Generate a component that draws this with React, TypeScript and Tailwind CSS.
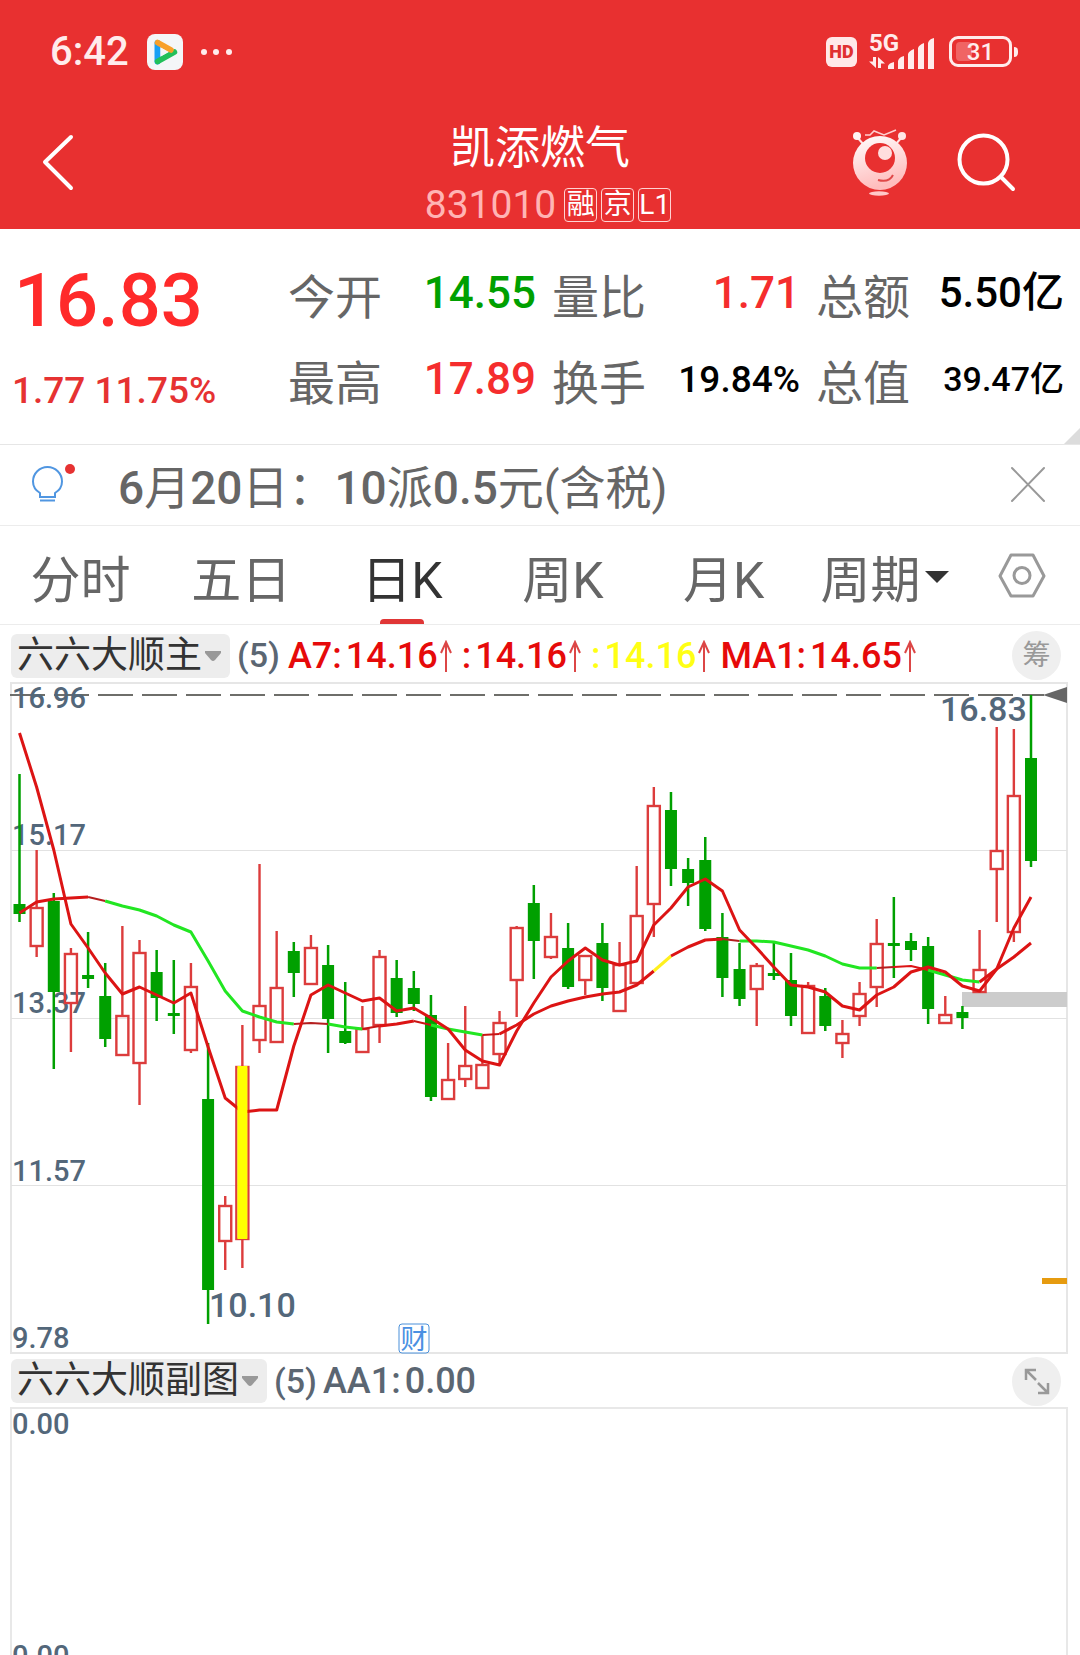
import { clsx } from "clsx";

type CandleKind = "up" | "down" | "mark";
type Candle = [kind: CandleKind, high: number, top: number, bottom: number, low: number];

const candles: Candle[] = [
  ["down", 94, 224, 234, 242],
  ["up", 170, 228, 266, 277],
  ["down", 213, 221, 312, 389],
  ["up", 268, 274, 323, 372],
  ["down", 252, 295, 299, 308],
  ["down", 283, 316, 359, 367],
  ["up", 246, 336, 375, 375],
  ["up", 260, 273, 383, 425],
  ["down", 270, 292, 318, 341],
  ["down", 280, 333, 336, 354],
  ["up", 283, 307, 370, 373],
  ["down", 363, 419, 610, 644],
  ["up", 516, 526, 561, 590],
  ["mark", 345, 387, 559, 588],
  ["up", 184, 326, 360, 373],
  ["up", 251, 308, 362, 362],
  ["down", 262, 271, 293, 317],
  ["up", 255, 268, 304, 304],
  ["down", 265, 285, 339, 373],
  ["down", 302, 351, 363, 364],
  ["up", 326, 349, 372, 372],
  ["up", 270, 277, 345, 363],
  ["down", 280, 298, 333, 337],
  ["down", 291, 308, 324, 331],
  ["down", 315, 335, 417, 421],
  ["up", 363, 400, 419, 419],
  ["up", 326, 386, 399, 407],
  ["up", 355, 385, 408, 408],
  ["up", 331, 343, 374, 383],
  ["up", 246, 248, 300, 337],
  ["down", 205, 223, 261, 299],
  ["up", 233, 257, 277, 279],
  ["down", 243, 268, 307, 309],
  ["up", 275, 276, 300, 315],
  ["down", 243, 263, 308, 321],
  ["up", 262, 285, 331, 331],
  ["up", 186, 236, 303, 303],
  ["up", 107, 126, 224, 257],
  ["down", 112, 130, 189, 206],
  ["down", 178, 189, 203, 226],
  ["down", 157, 180, 249, 251],
  ["down", 233, 257, 298, 317],
  ["down", 263, 289, 319, 326],
  ["up", 283, 286, 309, 346],
  ["down", 263, 293, 296, 300],
  ["down", 273, 300, 336, 346],
  ["up", 302, 306, 353, 353],
  ["down", 308, 316, 346, 351],
  ["up", 340, 354, 363, 378],
  ["up", 302, 314, 336, 346],
  ["up", 239, 264, 307, 327],
  ["down", 217, 263, 266, 298],
  ["down", 253, 261, 270, 281],
  ["down", 257, 266, 329, 344],
  ["up", 316, 335, 343, 343],
  ["down", 326, 332, 338, 349],
  ["up", 250, 290, 312, 312],
  ["up", 47, 171, 189, 242],
  ["up", 49, 116, 252, 262],
  ["down", 15, 78, 181, 187],
];

const fastLine = [
  53, 107, 170, 244, 268, 293, 314, 307, 315, 323, 313, 367, 418, 432, 430, 430, 366, 315, 305, 313,
  321, 318, 331, 328, 338, 349, 370, 381, 385, 351, 323, 297, 281, 268, 280, 285, 281, 245, 228, 207,
  199, 211, 250, 268, 287, 305, 307, 312, 326, 330, 315, 307, 292, 287, 292, 306, 311, 289, 248, 217,
];

const slowLine = [
  233, 222, 219, 218, 217, 221, 226, 230, 236, 245, 252, 281, 311, 331, 337, 342, 344, 343, 344, 347,
  349, 346, 344, 341, 345, 349, 352, 355, 354, 345, 334, 326, 321, 317, 314, 312, 305, 291, 276, 267,
  260, 259, 261, 261, 262, 266, 270, 276, 284, 288, 288, 287, 286, 290, 295, 300, 302, 289, 277, 263,
];

// The slow average changes colour with its direction.
const slowSegments: { from: number; to: number; color: string; width: number }[] = [
  { from: 0, to: 4, color: "#dc1414", width: 3 },
  { from: 4, to: 5, color: "#b41e1e", width: 2 },
  { from: 5, to: 16, color: "#22e622", width: 3 },
  { from: 16, to: 18, color: "#b41e1e", width: 2 },
  { from: 18, to: 20, color: "#22e622", width: 3 },
  { from: 20, to: 21, color: "#c81414", width: 2 },
  { from: 21, to: 23, color: "#dc1414", width: 3 },
  { from: 23, to: 24, color: "#c81414", width: 2 },
  { from: 24, to: 27, color: "#22e622", width: 3 },
  { from: 27, to: 28, color: "#c81414", width: 2 },
  { from: 28, to: 37, color: "#dc1414", width: 3 },
  { from: 37, to: 38, color: "#fff01e", width: 3 },
  { from: 38, to: 41, color: "#dc1414", width: 3 },
  { from: 41, to: 42, color: "#b41e1e", width: 2 },
  { from: 42, to: 50, color: "#22e622", width: 3 },
  { from: 50, to: 51, color: "#b41e1e", width: 2 },
  { from: 51, to: 53, color: "#dc1414", width: 2 },
  { from: 53, to: 56, color: "#22e622", width: 3 },
  { from: 56, to: 59, color: "#dc1414", width: 3 },
];

const axisLabels = [
  { text: "16.96", y: 28 },
  { text: "15.17", y: 165 },
  { text: "13.37", y: 333 },
  { text: "11.57", y: 501 },
  { text: "9.78", y: 668 },
];

const STEP = 1011.5 / 59;
const xOf = (i: number) => 19.5 + STEP * i;

function linePoints(values: number[], from = 0, to = values.length - 1) {
  return values
    .slice(from, to + 1)
    .map((y, i) => `${xOf(from + i).toFixed(1)},${y}`)
    .join(" ");
}

function CandleShape({ candle, index }: { candle: Candle; index: number }) {
  const [kind, high, top, bottom, low] = candle;
  const x = xOf(index);
  if (kind === "down") {
    return (
      <g fill="#00a000">
        <rect x={x - 1.25} y={high} width={2.5} height={low - high} />
        <rect x={x - 6} y={top} width={12} height={bottom - top} />
      </g>
    );
  }
  return (
    <g stroke="#dc3c3c" strokeWidth={2.4} fill="none">
      <path d={`M${x} ${high}V${top}M${x} ${bottom}V${low}`} />
      <rect x={x - 6} y={top} width={12} height={bottom - top} />
    </g>
  );
}

function MainChart() {
  const mark = candles.findIndex(([kind]) => kind === "mark");
  return (
    <svg viewBox="0 0 1080 675" className="block w-full" role="img" aria-label="日K线图">
      <rect x={11} y={3} width={1056} height={670} fill="none" stroke="#e6e6e6" strokeWidth={2} />
      <path d="M11 170.5H1067M11 338.5H1067M11 505.5H1067" stroke="#e2e2e2" strokeWidth={1} />
      <rect x={962} y={312} width={105} height={15} fill="#cccccc" />
      <rect x={1042} y={598} width={25} height={6} fill="#e69b0f" />
      <path d="M10 15H1044" stroke="#6e6e6a" strokeWidth={2} strokeDasharray="35 9" />
      <path d="M1022 15H1044" stroke="#6e6e6a" strokeWidth={2} />
      <path d="M1043 15L1067 7V23Z" fill="#666666" />
      <g fontSize={29} fontWeight={500} fill="#53677a">
        {axisLabels.map((label) => (
          <text key={label.text} x={12} y={label.y}>
            {label.text}
          </text>
        ))}
      </g>
      {candles.map((candle, i) => (
        <CandleShape key={i} candle={candle} index={i} />
      ))}
      {slowSegments.map((s) => (
        <polyline
          key={s.from}
          points={linePoints(slowLine, s.from, s.to)}
          fill="none"
          stroke={s.color}
          strokeWidth={s.width}
          strokeLinejoin="round"
        />
      ))}
      <polyline points={linePoints(fastLine)} fill="none" stroke="#dc1414" strokeWidth={3} strokeLinejoin="round" />
      <rect x={xOf(mark) - 5} y={386} width={10} height={173} fill="#ffff00" />
      <g fontSize={34} fontWeight={500} fill="#53677a">
        <text x={940} y={41}>16.83</text>
        <text x={209} y={637}>10.10</text>
      </g>
      <rect x={399} y={644} width={30} height={29} rx={3} fill="#ffffff" stroke="#4a90d9" strokeWidth={1} />
      <text x={414} y={669} fontSize={27} textAnchor="middle" fill="#4a90e2">
        财
      </text>
    </svg>
  );
}

function StatusBar() {
  return (
    <div className="flex h-[103px] items-center justify-between pr-[62px] pl-[50px] text-[#ffecec]">
      <div className="flex items-center">
        <span className="text-[40px] font-medium">6:42</span>
        <svg className="ml-[18px] size-9" viewBox="0 0 36 36" aria-hidden="true">
          <rect width="36" height="36" rx="8" fill="#f4f6f8" />
          <path d="M10.5 9V27.500" stroke="#18a0f5" strokeWidth="6" strokeLinecap="round" />
          <path d="M10.500 27.500L27.500 18" stroke="#22c05a" strokeWidth="5.500" strokeLinecap="round" />
          <path d="M10.500 8.500L24 16" stroke="#f8a02a" strokeWidth="5.500" strokeLinecap="round" />
          <path d="M13.500 13.500L21.500 18L13.500 22.500Z" fill="#f4f6f8" />
        </svg>
        <svg className="ml-4 h-2 w-9" viewBox="0 0 36 8" fill="currentColor" aria-hidden="true">
          <circle cx="5" cy="4" r="3" />
          <circle cx="17" cy="4" r="3" />
          <circle cx="30" cy="4" r="3" />
        </svg>
      </div>
      <div className="flex items-center">
        <span className="flex h-[30px] w-[31px] items-center justify-center rounded-md bg-[#ffe8e8] text-[18px] font-black text-[#e03030]">
          HD
        </span>
        <div className="relative ml-3 h-[36px] w-[68px]">
          <span className="absolute top-0 left-0 text-[24px] leading-[18px] font-bold">5G</span>
          <svg className="size-full" viewBox="0 0 68 36" fill="currentColor" aria-hidden="true">
            <path d="M4 23H7V34L0 27.500H4ZM9 34V23L16 29.500H12V34Z" />
            <path d="M19 35V32Q20 29 25 28V35ZM29 35V27Q30 23 35 22V35ZM39 35V20Q40 17 45 15V35ZM49 35V14Q50 11 55 9V35ZM59 35V9Q60 5 65 4V35Z" />
          </svg>
        </div>
        <div className="ml-3 flex items-center">
          <div className="relative flex h-[31px] w-[63px] items-center justify-center rounded-[9px] border-[3px] border-current p-1">
            <span className="absolute top-[3px] bottom-[3px] left-1 w-4 rounded-sm bg-[#f06464]" />
            <span className="relative text-[24px] leading-none font-medium">31</span>
          </div>
          <span className="ml-0.5 h-2.5 w-1 rounded-r-sm bg-current" />
        </div>
      </div>
    </div>
  );
}

function TitleBar() {
  return (
    <div className="grid h-[126px] grid-cols-[1fr_auto_1fr] items-center text-white">
      <div className="ml-10 pb-1.5">
        <button type="button" aria-label="返回" className="block h-16 w-10">
          <svg viewBox="0 0 40 64" className="size-full" fill="none" stroke="currentColor" strokeWidth="4" strokeLinecap="round" strokeLinejoin="round">
            <path d="M31 5L5 30L31 56" />
          </svg>
        </button>
      </div>
      <div className="flex flex-col items-center pt-4">
        <h1 className="text-[45px] leading-[60px]">凯添燃气</h1>
        <div className="flex h-[52px] items-center gap-1 pl-4">
          <span className="pr-1 text-[39px] text-[#ffb4b4]">831010</span>
          {["融", "京", "L1"].map((tag) => (
            <span key={tag} className="flex h-[34px] w-[33px] items-center justify-center rounded-sm border border-[#ffd2d2] text-[28px] leading-none">
              {tag}
            </span>
          ))}
        </div>
      </div>
      <div className="flex items-center justify-self-end pr-[62px] pb-2">
        <button type="button" aria-label="智能助手" className="mr-11 h-[72px] w-[60px]">
          <svg viewBox="850 126 60 72" className="size-full">
            <defs>
              <linearGradient id="robot" x1="0" y1="0" x2="0.300" y2="1">
                <stop offset="0" stopColor="#ffffff" />
                <stop offset="1" stopColor="#ffbcbc" />
              </linearGradient>
            </defs>
            <path d="M857 136L864 144M902 136L895 144" stroke="#ffe6e6" strokeWidth="2" />
            <circle cx="857" cy="135" r="4" fill="#fff5f5" />
            <circle cx="902" cy="135" r="4" fill="#ffe6e6" />
            <path d="M865 134H870L874 130L884 134L896 129" fill="none" stroke="#ffd0d0" strokeWidth="1.500" />
            <circle cx="880" cy="162" r="27" fill="url(#robot)" />
            <circle cx="880" cy="157" r="15" fill="#e83030" />
            <circle cx="885" cy="152" r="7" fill="#ffdede" />
            <path d="M878 179Q889 182 893 174" fill="none" stroke="#e04848" strokeWidth="2" />
            <ellipse cx="879" cy="192.500" rx="10" ry="2.200" fill="#ffc8c8" />
          </svg>
        </button>
        <button type="button" aria-label="搜索" className="size-16">
          <svg viewBox="954 130 64 64" className="size-full" fill="none" stroke="currentColor" strokeWidth="4" strokeLinecap="round">
            <circle cx="983.500" cy="158.500" r="24" />
            <path d="M1001 176L1013 188" />
          </svg>
        </button>
      </div>
    </div>
  );
}

const quotes = [
  { label: "今开", value: "14.55", style: "text-[44px] text-[#00a000]" },
  { label: "量比", value: "1.71", style: "text-[44px] text-[#f52d2d]" },
  { label: "总额", value: "5.50亿", style: "text-[42px] text-black" },
  { label: "最高", value: "17.89", style: "text-[44px] text-[#f52d2d]" },
  { label: "换手", value: "19.84%", style: "text-[37px] text-black" },
  { label: "总值", value: "39.47亿", style: "text-[34px] text-black" },
];

function QuotePanel() {
  return (
    <section className="relative grid h-[216px] grid-cols-[288px_1fr] border-b border-[#e6e6e6]">
      <div className="flex flex-col pt-7">
        <span className="pl-[14px] text-[74px] leading-[88px] font-medium text-[#ff2a2a]">16.83</span>
        <span className="pl-3 text-[37px] leading-[92px] font-medium text-[#e63232]">1.77 11.75%</span>
      </div>
      <dl className="grid grid-cols-3 content-start pt-[25px]">
        {quotes.map((q) => (
          <div key={q.label} className="flex h-[86px] items-center justify-between pr-4 whitespace-nowrap">
            <dt className="text-[47px] leading-none text-[#666666]">{q.label}</dt>
            <dd className={clsx("pb-2 leading-none font-medium", q.style)}>{q.value}</dd>
          </div>
        ))}
      </dl>
      <svg className="absolute right-0 bottom-0 size-4" viewBox="0 0 16 16" aria-hidden="true">
        <path d="M16 0V16H0Z" fill="#dcdcdc" />
      </svg>
    </section>
  );
}

function NoticeBar() {
  return (
    <div className="flex h-[81px] items-center border-b border-[#ececec] pr-8 pl-[30px]">
      <svg className="h-11 w-12" viewBox="0 0 48 44" fill="none" aria-hidden="true">
        <path d="M10 34V30C5 27 3 23 3 18.500A14.500 14.500 0 0 1 32 18.500C32 23 30 27 25 30V34Z" stroke="#5096e1" strokeWidth="2" />
        <path d="M10 37.500H25" stroke="#5096e1" strokeWidth="2" />
        <circle cx="40" cy="6" r="5" fill="#e63232" />
      </svg>
      <p className="ml-10 flex-1 pt-1.5 text-[46px] text-[#666666]">
        <b className="font-medium">6</b>月<b className="font-medium">20</b>日：<b className="font-medium">10</b>派
        <b className="font-medium">0.5</b>元(含税)
      </p>
      <button type="button" aria-label="关闭" className="size-10">
        <svg viewBox="0 0 40 40" className="size-full" stroke="#999999" strokeWidth="2" strokeLinecap="round">
          <path d="M4 3L36 36M36 3L4 36" />
        </svg>
      </button>
    </div>
  );
}

const tabs = ["分时", "五日", "日K", "周K", "月K", "周期"];

function PeriodTabs() {
  return (
    <nav className="grid h-[99px] grid-cols-[repeat(6,1fr)_115px] border-b border-[#ececec]">
      {tabs.map((tab) => {
        const active = tab === "日K";
        return (
          <button
            key={tab}
            type="button"
            aria-pressed={active}
            className={clsx(
              "relative flex items-center justify-center text-[50px]",
              active ? "text-[#333333]" : "text-[#666666]",
            )}
          >
            <span className="pt-3">{tab}</span>
            {tab === "周期" && (
              <svg className="mt-1 ml-1 h-3 w-6" viewBox="0 0 24 12" aria-hidden="true">
                <path d="M0 0H24L12 12Z" fill="#333333" />
              </svg>
            )}
            {active && <span className="absolute bottom-0 left-1/2 h-[5px] w-11 -translate-x-1/2 rounded-t bg-[#e03636]" />}
          </button>
        );
      })}
      <button type="button" aria-label="设置" className="flex items-center justify-center">
        <svg className="h-12 w-[50px]" viewBox="0 0 50 48" fill="none" stroke="#999999" strokeWidth="3" strokeLinejoin="round">
          <path d="M14 4H36L47 25L36 45H14L3 25Z" />
          <circle cx="25" cy="24.500" r="8" />
        </svg>
      </button>
    </nav>
  );
}

function IndicatorPicker({ name }: { name: string }) {
  return (
    <button type="button" className="flex h-11 items-center gap-[3px] rounded-md bg-[#ededed] pr-[9px] pl-1.5 text-[37px] text-[#333333]">
      {name}
      <svg className="h-3 w-4" viewBox="0 0 16 12" aria-hidden="true">
        <path d="M0 1H16V3L10 10Q8 12 6 10L0 3Z" fill="#999999" />
      </svg>
    </button>
  );
}

function UpArrow() {
  return (
    <svg className="mx-0.5 h-8 w-3" viewBox="0 0 12 32" fill="none" stroke="#dc4646" strokeWidth="2" aria-hidden="true">
      <path d="M6 32V2M1 13L6 2L11 13" />
    </svg>
  );
}

const readings = [
  { name: "A7:", value: "14.16", color: "text-[#e60a0a]" },
  { name: ":", value: "14.16", color: "text-[#e60a0a]" },
  { name: ":", value: "14.16", color: "text-[#ffff14]" },
  { name: "MA1:", value: "14.65", color: "text-[#e60a0a]" },
];

export default function App() {
  return (
    <main className="flex h-screen flex-col overflow-hidden bg-white font-[Roboto,'Noto_Sans_CJK_SC',sans-serif] [&>*]:shrink-0">
      <header className="bg-[#e83030]">
        <StatusBar />
        <TitleBar />
      </header>
      <QuotePanel />
      <NoticeBar />
      <PeriodTabs />

      <div className="flex h-[55px] items-center pt-1.5 pr-[19px] pl-[11px] text-[36px] font-medium">
        <div className="font-normal">
          <IndicatorPicker name="六六大顺主" />
        </div>
        <span className="ml-[7px] text-[34px] text-[#5b6672]">(5)</span>
        <div className="ml-2 flex items-center gap-2">
          {readings.map((r, i) => (
            <span key={i} className={clsx("flex items-center", r.color)}>
              {r.name}
              <span className="ml-1">{r.value}</span>
              <UpArrow />
            </span>
          ))}
        </div>
        <button type="button" className="ml-auto size-[49px] rounded-full bg-[#efefef] text-[28px] font-normal text-[#999999]">
          筹
        </button>
      </div>
      <MainChart />

      <div className="flex h-[52px] items-center pr-[19px] pl-[11px] text-[36px] font-medium text-[#5b6672]">
        <div className="font-normal">
          <IndicatorPicker name="六六大顺副图" />
        </div>
        <span className="ml-[7px] text-[34px]">(5)</span>
        <span className="ml-1.5">AA1:</span>
        <span className="ml-1">0.00</span>
        <button type="button" aria-label="展开" className="ml-auto flex size-[49px] items-center justify-center rounded-full bg-[#efefef]">
          <svg className="size-7" viewBox="0 0 28 28" fill="none" stroke="#999999" strokeWidth="2.500">
            <path d="M3 13V3H13M3 3L13 13M25 16V26H15M25 26L15 16" />
          </svg>
        </button>
      </div>
      <section className="mr-3 ml-[10px] flex h-[266px] flex-col justify-between border-2 border-[#e8e8e8] text-[29px] leading-[30px] font-medium text-[#53677a]">
        <span>0.00</span>
        <span>0.00</span>
      </section>
    </main>
  );
}
